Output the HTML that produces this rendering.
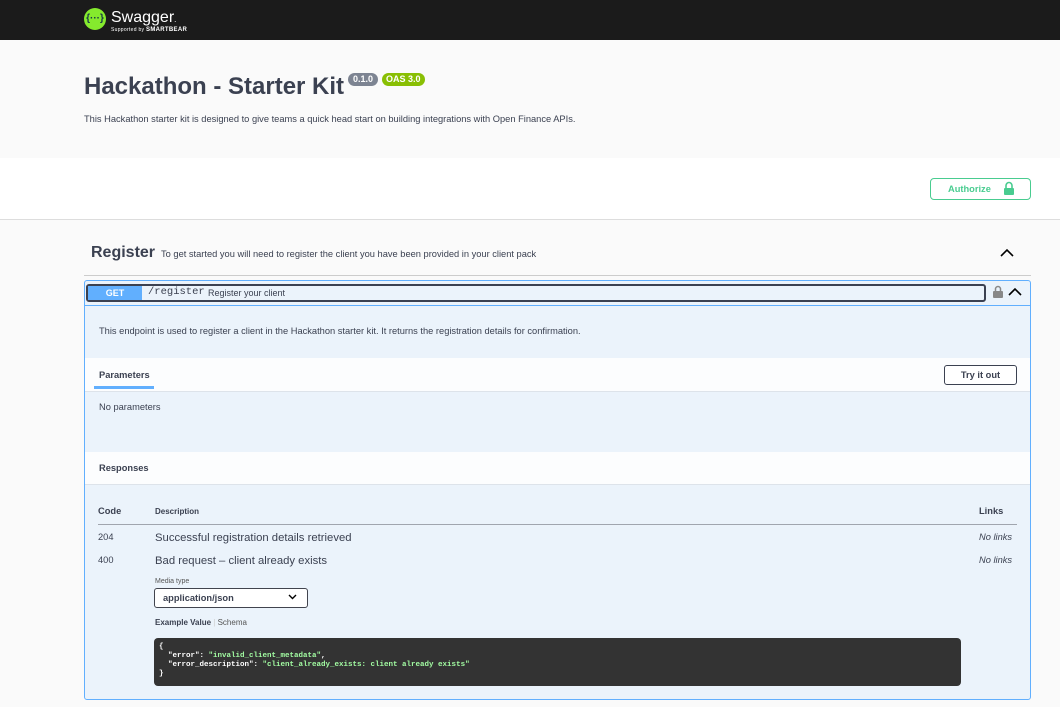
<!DOCTYPE html>
<html><head><meta charset="utf-8"><style>
*{box-sizing:border-box;margin:0;padding:0}
body{width:1060px;height:707px;overflow:hidden;background:#fafafa;font-family:"Liberation Sans",sans-serif;color:#3b4151;position:relative}
.a{position:absolute}
.mono{font-family:"Liberation Mono",monospace}
</style></head><body>
<div class="a" style="left:0;top:0;width:1060px;height:40px;background:#1b1b1b"></div>
<div class="a" style="left:84px;top:8px;width:22px;height:22px;border-radius:50%;background:#85ea2d;color:#173647;font-size:10px;font-weight:bold;text-align:center;line-height:22px">{···}</div>
<div class="a" style="left:111px;top:9px;color:#fff;font-size:16px">Swagger<span style="font-size:8px">.</span></div>
<div class="a" style="left:111px;top:27px;color:#fff;font-size:5px;letter-spacing:.3px">Supported by <b style="font-size:6px">SMARTBEAR</b></div>

<div class="a" style="left:0;top:158px;width:1060px;height:62px;background:#fff;border-bottom:1px solid #ddd"></div>
<div class="a" style="left:84px;top:73px;font-size:24px;font-weight:bold">Hackathon - Starter Kit</div>
<div class="a" style="left:348px;top:73px;height:13px;padding:0 5px;background:#7d8492;color:#fff;font-size:9px;font-weight:bold;border-radius:7px;line-height:13px">0.1.0</div>
<div class="a" style="left:382px;top:73px;height:13px;padding:0 4px;background:#89bf04;color:#fff;font-size:9px;font-weight:bold;border-radius:7px;line-height:13px">OAS 3.0</div>
<div class="a" style="left:84px;top:114px;font-size:9.3px">This Hackathon starter kit is designed to give teams a quick head start on building integrations with Open Finance APIs.</div>

<div class="a" style="left:930px;top:178px;width:101px;height:22px;border:1px solid #49cc90;border-radius:4px;background:#fff;color:#49cc90;font-size:9.3px;font-weight:bold;line-height:20px;padding-left:17px">Authorize</div>
<svg class="a" style="left:1003px;top:181px" width="12" height="15" viewBox="0 0 12 15"><path d="M3 7V4.5a3 3 0 0 1 6 0V7" fill="none" stroke="#49cc90" stroke-width="1.6"/><rect x="1" y="7" width="10" height="7" rx="1" fill="#49cc90"/></svg>

<div class="a" style="left:91px;top:244px;font-size:16px;font-weight:bold">Register</div>
<div class="a" style="left:161px;top:249px;font-size:9.3px">To get started you will need to register the client you have been provided in your client pack</div>
<svg class="a" style="left:1000px;top:248px" width="14" height="9" viewBox="0 0 14 9"><path d="M1 8l6-6 6 6" fill="none" stroke="#000" stroke-width="1.6"/></svg>
<div class="a" style="left:84px;top:275px;width:947px;height:1px;background:#ccc"></div>

<div class="a" style="left:84px;top:280px;width:947px;height:420px;border:1px solid #61affe;border-radius:3px;background:#ebf3fb"></div>
<div class="a" style="left:85px;top:305px;width:945px;height:1px;background:#61affe"></div>
<div class="a" style="left:86px;top:284px;width:900px;height:18px;border:2px solid #3b4151;border-radius:3px;background:#ebf3fb"></div>
<div class="a" style="left:88px;top:286px;width:54px;height:14px;background:#61affe;color:#fff;font-size:9px;font-weight:bold;text-align:center;line-height:14px">GET</div>
<div class="a mono" style="left:148px;top:286px;font-size:10.5px;color:#3b4151">/register</div>
<div class="a" style="left:208px;top:288px;font-size:9px">Register your client</div>
<svg class="a" style="left:993px;top:285px" width="10" height="14" viewBox="0 0 10 14"><path d="M2.5 6V4a2.5 2.5 0 0 1 5 0V6" fill="none" stroke="#888" stroke-width="1.5"/><rect x="0" y="6" width="10" height="7" rx="1" fill="#888"/></svg>
<svg class="a" style="left:1008px;top:287px" width="14" height="9" viewBox="0 0 14 9"><path d="M1 8l6-6 6 6" fill="none" stroke="#000" stroke-width="1.6"/></svg>

<div class="a" style="left:99px;top:326px;font-size:9.3px">This endpoint is used to register a client in the Hackathon starter kit. It returns the registration details for confirmation.</div>

<div class="a" style="left:85px;top:358px;width:945px;height:34px;background:#fcfdfe;border-bottom:1px solid #dde3ea"></div>
<div class="a" style="left:99px;top:370px;font-size:9.3px;font-weight:bold">Parameters</div>
<div class="a" style="left:94px;top:386px;width:60px;height:3px;background:#61affe"></div>
<div class="a" style="left:944px;top:365px;width:73px;height:20px;border:1px solid #3b4151;border-radius:3px;background:#fff;font-size:9.3px;font-weight:bold;text-align:center;line-height:18px">Try it out</div>
<div class="a" style="left:99px;top:402px;font-size:9.3px">No parameters</div>

<div class="a" style="left:85px;top:452px;width:945px;height:33px;background:#fcfdfe;border-bottom:1px solid #dde3ea"></div>
<div class="a" style="left:99px;top:463px;font-size:9.3px;font-weight:bold">Responses</div>

<div class="a" style="left:98px;top:506px;font-size:9.3px;font-weight:bold">Code</div>
<div class="a" style="left:155px;top:507px;font-size:8px;font-weight:bold">Description</div>
<div class="a" style="left:979px;top:506px;font-size:9.3px;font-weight:bold">Links</div>
<div class="a" style="left:98px;top:524px;width:919px;height:1px;background:#a0a5ae"></div>
<div class="a" style="left:98px;top:532px;font-size:9.3px">204</div>
<div class="a" style="left:155px;top:532px;font-size:11.3px">Successful registration details retrieved</div>
<div class="a" style="left:979px;top:532px;font-size:9.3px;font-style:italic">No links</div>
<div class="a" style="left:98px;top:555px;font-size:9.3px">400</div>
<div class="a" style="left:155px;top:555px;font-size:11.3px">Bad request – client already exists</div>
<div class="a" style="left:979px;top:555px;font-size:9.3px;font-style:italic">No links</div>
<div class="a" style="left:155px;top:578px;font-size:7px;color:#555">Media type</div>
<div class="a" style="left:154px;top:588px;width:154px;height:20px;border:1px solid #41444e;border-radius:3px;background:#fff;font-size:9.3px;font-weight:bold;line-height:18px;padding-left:8px">application/json</div>
<svg class="a" style="left:288px;top:594px" width="9" height="6" viewBox="0 0 9 6"><path d="M1 1l3.5 3.5L8 1" fill="none" stroke="#000" stroke-width="1.4"/></svg>
<div class="a" style="left:155px;top:618px;font-size:8px"><b>Example Value</b> <span style="color:#ccc">|</span> <span style="color:#555">Schema</span></div>
<div class="a mono" style="left:154px;top:638px;width:807px;height:48px;background:#333;border-radius:4px;color:#fff;font-size:7.5px;font-weight:bold;line-height:9px;padding:5px 5px;white-space:pre">{
  "error": <span style="color:#a2fca2">"invalid_client_metadata"</span>,
  "error_description": <span style="color:#a2fca2">"client_already_exists: client already exists"</span>
}</div>
</body></html>
